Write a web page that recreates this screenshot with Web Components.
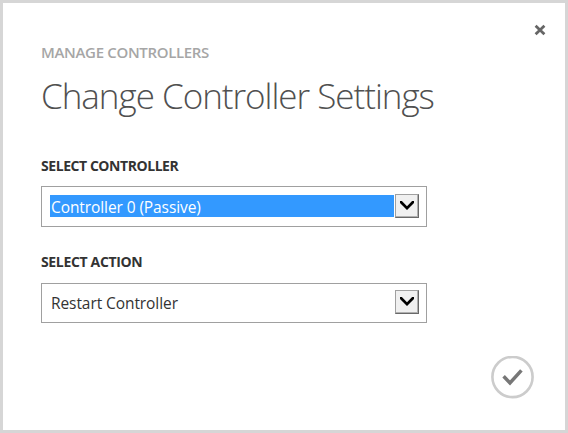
<!DOCTYPE html>
<html lang="en"><head><meta charset="utf-8"><title>Change Controller Settings</title>
<style>
html,body{margin:0;height:100%;overflow:hidden}
body{font-family:"Open Sans","Noto Sans",sans-serif;color:#333}
</style></head><body>
<settings-dialog>
<dialog-heading slot="heading"><span slot="eyebrow">MANAGE CONTROLLERS</span><span slot="title">Change Controller Settings</span></dialog-heading>
<select-field selected style="--box-h:41px;--gap:11px;--ls:-.44px;--vls:-.09px;--pb:1px"><span slot="label">SELECT CONTROLLER</span><span slot="value">Controller 0 (Passive)</span></select-field>
<select-field style="--box-h:40px;--gap:12px;--ls:-.34px;--vls:-.08px;--pb:2px"><span slot="label">SELECT ACTION</span><span slot="value">Restart Controller</span></select-field>
</settings-dialog>
<script>
const define=(name,html)=>customElements.define(name,class extends HTMLElement{
  constructor(){super();this.attachShadow({mode:"open"}).innerHTML=html}
});
define("close-button",`<style>:host{display:block;width:12px;height:12px;margin-right:3px}svg{display:block}</style>
<svg width="12" height="12" viewBox="0 0 12 12"><path d="M1.6 1.8 10.4 10.2M10.4 1.8 1.6 10.2" stroke="#666" stroke-width="2.8"/></svg>`);
define("confirm-button",`<style>:host{display:block;width:44px;height:44px}svg{display:block}</style>
<svg width="44" height="44" viewBox="0 0 44 44"><circle cx="21.5" cy="21" r="20.1" fill="none" stroke="#ccc" stroke-width="2.6"/><path d="M12.6 20.3 19 27 30.4 14.3" fill="none" stroke="#777" stroke-width="3.5"/></svg>`);
define("drop-arrow",`<style>:host{display:block;box-sizing:border-box;width:24px;height:24px;background:#f0f0f0;border:1px solid #a0a0a0;border-right-color:#696969;border-bottom-color:#696969;box-shadow:inset -1px -1px #b0b0b0}svg{display:block}</style>
<svg width="22" height="22" viewBox="0 0 22 22"><path d="M4 6h1.9l5.1 5.2L16.1 6H18v2.1L11 15 4 8.1z" fill="#000"/></svg>`);
define("dialog-heading",`<style>:host{display:block}
.e{font-size:15px;line-height:20px;font-weight:600;color:#a6a6a6;letter-spacing:-.33px}
.t{font-size:35px;line-height:48px;font-weight:300;color:#505050;margin-top:10px;white-space:nowrap;letter-spacing:-1.02px}</style>
<div class="e"><slot name="eyebrow"></slot></div><div class="t"><slot name="title"></slot></div>`);
define("select-field",`<style>:host{display:block;width:386px}
.l{font-size:14px;font-weight:700;line-height:18px;letter-spacing:var(--ls);white-space:nowrap}
.b{box-sizing:border-box;display:flex;align-items:center;height:var(--box-h);margin-top:var(--gap);border:1px solid #a0a0a0;padding:0 7px var(--pb) 8px;background:#fff}
.v{flex:1;height:22px;line-height:24px;font-size:15.5px;padding-left:1px;margin-right:1px;letter-spacing:var(--vls);white-space:nowrap}
:host([selected]) .v{background:#39f;color:#fff}</style>
<div class="l"><slot name="label"></slot></div><div class="b"><div class="v"><slot name="value"></slot></div><drop-arrow></drop-arrow></div>`);
define("settings-dialog",`<style>:host{box-sizing:border-box;display:grid;grid-template-columns:1fr auto;width:568px;height:433px;border:3px solid #d6d6d6;background:#fff;padding:21px 16px 30px 38px}
main{display:flex;flex-direction:column}
main ::slotted(dialog-heading){margin:18px 0 37px}
main ::slotted(select-field){margin-bottom:26px}
aside{display:flex;flex-direction:column;justify-content:space-between;align-items:flex-end;width:60px}
confirm-button{margin-right:14px}</style>
<main><slot name="heading"></slot><slot></slot></main><aside><close-button></close-button><confirm-button></confirm-button></aside>`);
</script></body></html>
